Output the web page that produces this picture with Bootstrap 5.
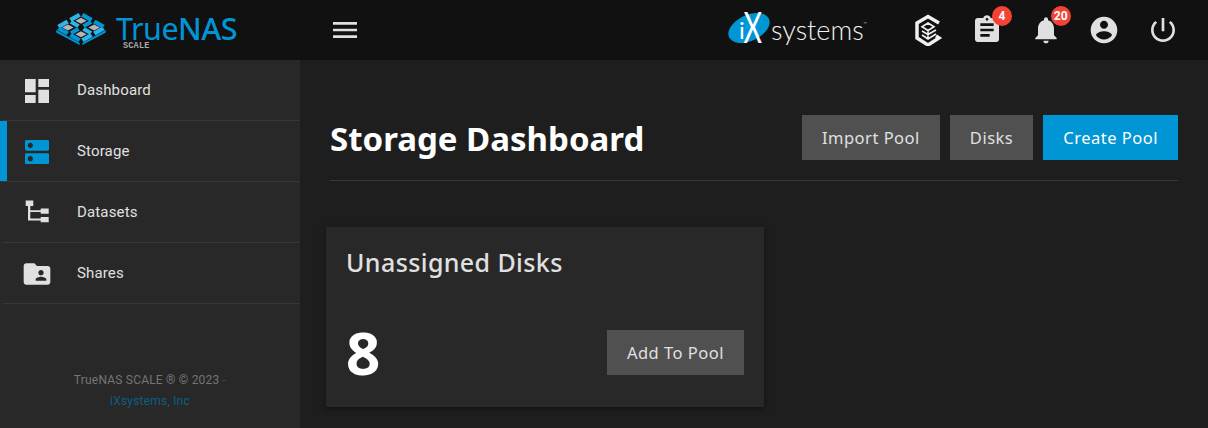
<!DOCTYPE html>
<html lang="en">
<head>
<meta charset="utf-8">
<title>Storage Dashboard</title>
<link href="https://cdn.jsdelivr.net/npm/bootstrap@5.3.0/dist/css/bootstrap.min.css" rel="stylesheet">
<script src="https://cdn.jsdelivr.net/npm/bootstrap@5.3.0/dist/js/bootstrap.bundle.min.js"></script>
<style>
    html, body { height: 428px; overflow: hidden; background: #1e1e1e; }
    body { font-family: Roboto, "Liberation Sans", sans-serif; color: #e0e0e0; }

    .top-bar { height: 60px; background: #111; }
    .logo-box { width: 300px; padding: 0 0 4px 56px; }
    .logo-text { font-family: "Noto Sans", sans-serif; color: #0095d5; font-size: 30.5px; line-height: 24px; letter-spacing: -.5px; margin-left: 10px; }
    .logo-text b { font-weight: 500; }
    .logo-sub { font-family: "Liberation Mono", monospace; font-size: 8.5px; line-height: 7px; color: #aaa; font-weight: 700; letter-spacing: .2px; position: absolute; left: 123px; top: 32px; }
    .menu-btn { margin-left: 29px; }
    .ix-logo { margin-right: 45px; }
    .ix-logo svg { overflow: visible; margin-bottom: 4px; }
    .ix-word { font-family: Lato, sans-serif; font-weight: 300; font-size: 27px; line-height: 30px; color: #f2f2f2; margin-left: 1px; }
    .ix-tm { font-size: 6px; line-height: 6px; color: #bbb; align-self: flex-start; margin-top: 9px; }
    .bar-icon { position: relative; width: 32px; height: 32px; margin-right: 26.67px; display: block; }
    .bar-icon:last-child { margin-right: 29px; }
    .bar-icon svg { display: block; fill: #e0e0e0; }
    .count-pill { position: absolute; top: -8px; left: 21px; min-width: 20px; height: 20px; padding: 0 3px; border-radius: 10px; background: #f44336; color: #fff; font-size: 12px; font-weight: 700; line-height: 20px; text-align: center; }

    .side-nav { width: 300px; height: 368px; background: #282828; }
    .side-link { height: 61px; padding: 1px 0 0 21px; border-bottom: 1px solid #383838; margin-left: 3px; color: #e0e0e0; font-size: 15px; text-decoration: none; letter-spacing: .15px; }
    .side-link svg { fill: #e0e0e0; margin-right: 24px; margin-left: -3px; }
    .side-link.is-active { margin-left: 0; padding-left: 24px; box-shadow: inset 7px 0 0 #0095d5; }
    .side-link.is-active svg { fill: #0095d5; }
    .side-foot { font-size: 12px; line-height: 21px; color: #757575; margin-top: 66px; letter-spacing: .2px; }
    .side-foot a, .side-foot span { color: #0c5f85; text-decoration: none; }

    .main-pane { padding: 55px 30px 0 30px; background: #1e1e1e; }
    .head-row { padding-bottom: 20px; border-bottom: 1px solid #383838; box-sizing: content-box; height: 45px; }
    .page-title { font-family: "Noto Sans", sans-serif; font-size: 33px; font-weight: 700; color: #fff; margin: 2px 0 0; line-height: 45px; }
    .btn-row { gap: 10px; }
    .flat-btn { height: 45px; padding: 0 20px; border: 0; border-radius: 0; background: #505050; color: #e0e0e0; font-family: "Noto Sans", sans-serif; font-size: 16.5px; line-height: 45px; letter-spacing: .5px; }
    .flat-btn.is-blue { background: #0095d5; color: #fff; }
    .disk-card { width: 438px; height: 180px; margin: 46px 0 0 -4px; padding: 20px 20px 32px; background: #282828; border: 0; border-radius: 0; box-shadow: 0 2px 6px rgba(0,0,0,.45); }
    .disk-title { font-family: "Noto Sans", sans-serif; font-size: 25px; line-height: 30px; color: #e0e0e0; margin: 0; letter-spacing: .4px; }
    .disk-num { font-family: "Noto Sans", sans-serif; font-size: 60px; font-weight: 700; line-height: 45px; color: #fff; }
</style>
</head>
<body>
<header class="top-bar d-flex align-items-center">
    <div class="logo-box d-flex align-items-center position-relative">
        <svg width="50" height="34" viewBox="3 0 44 34" preserveAspectRatio="none">
            <g fill="none" stroke-width="4">
                <path d="M23.800 3.800L15.700 9M13.300 10.500L5.200 15.700M22.800 15.100L16.200 10.900M27.200 17.900L33.800 22.100M44.800 17.300L36.700 22.500M34.300 24L26.200 29.200" stroke="#2db4e8"/>
                <path d="M26.200 3.800L34.300 9M36.700 10.500L44.800 15.700M27.200 15.100L33.800 10.900M22.800 17.900L16.200 22.100M5.200 17.300L13.300 22.500M15.700 24L23.800 29.200" stroke="#0095d5"/>
            </g>
            <path d="M3.200 19L23.800 32V34L3.200 21.500zM46.800 19L26.200 32V34L46.800 21.500z" fill="#0095d5"/>
            <path d="M25 6.800l5 3-5 3-5-3zM13.500 13.500l5 3-5 3-5-3zM36.500 13.500l5 3-5 3-5-3zM25 20.300l5 3-5 3-5-3z" fill="#b5b5b5"/>
        </svg>
        <span class="logo-text">True<b>NAS</b></span>
        <span class="logo-sub">SCALE</span>
    </div>
    <a class="menu-btn d-block" href="#" aria-label="Menu">
        <svg width="32" height="32" viewBox="0 0 24 24" fill="#e0e0e0" class="d-block"><path d="M3 18h18v-2H3v2zm0-5h18v-2H3v2zm0-7v2h18V6H3z"/></svg>
    </a>
    <div class="ms-auto d-flex align-items-center">
        <div class="ix-logo d-flex align-items-center">
            <svg width="42" height="32" viewBox="0 0 42 32">
                <ellipse cx="21" cy="16" rx="22" ry="13" transform="rotate(-25 21 16)" fill="#0095d5"/>
                <text x="11" y="27" font-family="Lato, sans-serif" font-size="24" fill="#fff">i</text>
                <text transform="translate(15.500 31) scale(.68 1)" font-family="Lato, sans-serif" font-size="42" fill="#fff">X</text>
            </svg>
            <span class="ix-word">systems</span>
            <span class="ix-tm">™</span>
        </div>
        <a class="bar-icon" href="#" aria-label="TrueCommand">
            <svg width="32" height="32" viewBox="0 0 32 32">
                <path d="M27 9L16 2.500 5 9V24L16 31 27 24 24 22" stroke="#f0f0f0" stroke-width="3.500" style="fill:none"/>
                <path d="M16 9L22 12.700 16 16.500 10 12.700zM16 16.500V24M10 17L16 20.500 24 16M10 21L16 25 24 20" stroke="#f0f0f0" stroke-width="1.600" style="fill:none"/>
            </svg>
        </a>
        <a class="bar-icon" href="#" aria-label="Tasks">
            <svg width="32" height="32" viewBox="0 0 24 24"><path d="M19 3h-4.180C14.400 1.840 13.300 1 12 1c-1.300 0-2.400.84-2.820 2H5c-1.100 0-2 .9-2 2v14c0 1.100.9 2 2 2h14c1.100 0 2-.9 2-2V5c0-1.100-.9-2-2-2zm-7 0c.55 0 1 .45 1 1s-.45 1-1 1-1-.45-1-1 .45-1 1-1zm2 14H7v-2h7v2zm3-4H7v-2h10v2zm0-4H7V7h10v2z"/></svg>
            <span class="count-pill">4</span>
        </a>
        <a class="bar-icon" href="#" aria-label="Alerts">
            <svg width="32" height="32" viewBox="0 0 24 24"><path d="M12 22c1.100 0 2-.9 2-2h-4c0 1.100.89 2 2 2zm6-6v-5c0-3.070-1.640-5.640-4.500-6.320V4c0-.83-.67-1.500-1.500-1.500s-1.500.67-1.500 1.500v.68C7.630 5.360 6 7.920 6 11v5l-2 2v1h16v-1l-2-2z"/></svg>
            <span class="count-pill">20</span>
        </a>
        <a class="bar-icon" href="#" aria-label="Account">
            <svg width="32" height="32" viewBox="0 0 24 24"><path d="M12 2C6.480 2 2 6.480 2 12s4.480 10 10 10 10-4.480 10-10S17.520 2 12 2zm0 3c1.660 0 3 1.340 3 3s-1.340 3-3 3-3-1.340-3-3 1.340-3 3-3zm0 14.200c-2.500 0-4.710-1.280-6-3.220.03-1.990 4-3.080 6-3.080 1.990 0 5.970 1.090 6 3.080-1.290 1.940-3.500 3.220-6 3.220z"/></svg>
        </a>
        <a class="bar-icon" href="#" aria-label="Power">
            <svg width="32" height="32" viewBox="0 0 24 24"><path d="M13 3h-2v10h2V3zm4.830 2.170l-1.420 1.420C17.990 7.860 19 9.810 19 12c0 3.870-3.130 7-7 7s-7-3.130-7-7c0-2.190 1.010-4.140 2.580-5.420L6.170 5.170C4.230 6.820 3 9.260 3 12c0 4.970 4.030 9 9 9s9-4.030 9-9c0-2.740-1.230-5.180-3.170-6.830z"/></svg>
        </a>
    </div>
</header>

<div class="d-flex">
    <nav class="side-nav flex-shrink-0">
        <a class="side-link d-flex align-items-center" href="#">
            <svg width="32" height="32" viewBox="0 0 24 24"><path d="M3 13h8V3H3v10zm0 8h8v-6H3v6zm10 0h8V11h-8v10zm0-18v6h8V3h-8z"/></svg>
            Dashboard
        </a>
        <a class="side-link is-active d-flex align-items-center" href="#">
            <svg width="32" height="32" viewBox="0 0 24 24"><path d="M20 13H4c-.55 0-1 .45-1 1v6c0 .55.45 1 1 1h16c.55 0 1-.45 1-1v-6c0-.55-.45-1-1-1zM7 19c-1.100 0-2-.9-2-2s.9-2 2-2 2 .9 2 2-.9 2-2 2zM20 3H4c-.55 0-1 .45-1 1v6c0 .55.45 1 1 1h16c.55 0 1-.45 1-1V4c0-.55-.45-1-1-1zM7 9c-1.100 0-2-.9-2-2s.9-2 2-2 2 .9 2 2-.9 2-2 2z"/></svg>
            Storage
        </a>
        <a class="side-link d-flex align-items-center" href="#">
            <svg width="32" height="32" viewBox="0 0 32 32"><path d="M4.700 3.500h7.600v5.400h-3v4.300h10.400v-1.800h8v5.400h-8v-1.700H9.300v6.500h10.400v-1.700h8v5.400h-8v-1.800H7V8.900H4.700z"/></svg>
            Datasets
        </a>
        <a class="side-link d-flex align-items-center" href="#">
            <svg width="32" height="32" viewBox="0 0 24 24"><path d="M20 6h-8l-2-2H4c-1.100 0-2 .9-2 2v12c0 1.100.9 2 2 2h16c1.100 0 2-.9 2-2V8c0-1.100-.9-2-2-2zm-5 3c1.100 0 2 .9 2 2s-.9 2-2 2-2-.9-2-2 .9-2 2-2zm4 8h-8v-1c0-1.330 2.670-2 4-2s4 .67 4 2v1z"/></svg>
            Shares
        </a>
        <div class="side-foot text-center">
            TrueNAS SCALE ® © 2023 <span>-</span><br>
            <a href="#">iXsystems, Inc</a>
        </div>
    </nav>

    <main class="main-pane flex-grow-1">
        <div class="head-row d-flex align-items-center justify-content-between">
            <h1 class="page-title">Storage Dashboard</h1>
            <div class="d-flex btn-row">
                <button class="btn flat-btn" type="button">Import Pool</button>
                <button class="btn flat-btn" type="button">Disks</button>
                <button class="btn flat-btn is-blue" type="button">Create Pool</button>
            </div>
        </div>
        <section class="card disk-card d-flex flex-column justify-content-between">
            <h2 class="disk-title">Unassigned Disks</h2>
            <div class="d-flex align-items-center justify-content-between">
                <span class="disk-num">8</span>
                <button class="btn flat-btn" type="button">Add To Pool</button>
            </div>
        </section>
    </main>
</div>
</body>
</html>
